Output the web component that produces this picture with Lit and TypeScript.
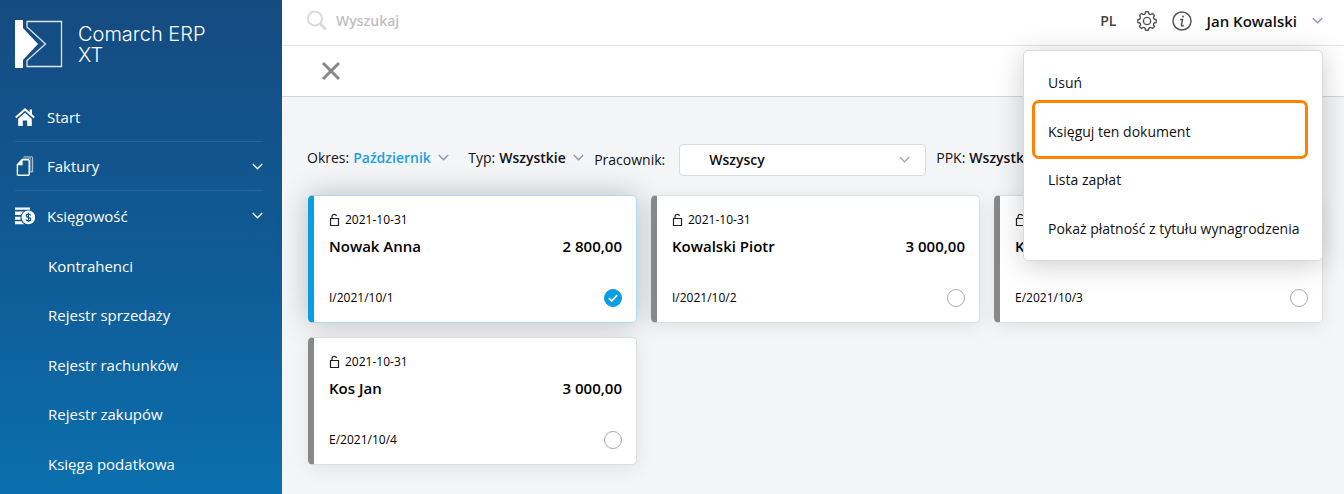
import { LitElement, html, css, svg, nothing } from "lit";
import { customElement, property } from "lit/decorators.js";

const chevron = html`<svg class="chevron" width="11" height="7" viewBox="0 0 11 7" aria-hidden="true">
  <path d="M0.8 1 5.5 5.8 10.2 1" fill="none" stroke="currentColor" stroke-width="1.3" />
</svg>`;

const houseIcon = svg`
  <path d="M0.8 10.6 10 2.4l9.2 8.2" fill="none" stroke="#fff" stroke-width="2" />
  <path d="M14.6 2.4h2.4v5l-2.4-2.2z" fill="#fff" />
  <path d="M10 5.8 3.2 11.8V19h4.6v-5.6h4.4V19h4.6v-7.2z" fill="#fff" />`;

const pagesIcon = svg`
  <g fill="none" stroke="#fff">
    <path d="M8.6.8h8q1 0 1 1V15.6H15.6" stroke-opacity="0.6" stroke-width="1.2" />
    <path d="M7.4 2.4h7.4q1 0 1 1V17" stroke-opacity="0.5" stroke-width="1" />
    <path d="M7 3.8h6.2q1 0 1 1V18.2q0 1-1 1H3.4q-1 0-1-1V8.6z" stroke-width="1.4" />
  </g>
  <path d="M7.6 3.6v5.6H2.2z" fill="#fff" />`;

const moneyIcon = svg`
  <path d="M0 1.4h15v2.4H0zM0 5.6h8.6Q6.6 7 6 9H0zM0 10.8h5.6q-.4 1.4 0 3H0zM0 15.2h6.4q1 2 3 3H0z" fill="#fff" />
  <circle cx="13.4" cy="11.4" r="6.8" fill="#fff" />
  <path d="M15.8 9.4q-.6-1.2-2.4-1.2-2.2 0-2.2 1.6 0 1.2 2.2 1.6 2.4.4 2.4 1.8 0 1.6-2.3 1.6-2 0-2.6-1.4M13.4 6.8v9.2" fill="none" stroke="#13568f" stroke-width="1.2" />`;

const gearPath = (() => {
  const teeth = 8;
  const points: string[] = [];
  for (let i = 0; i < teeth; i++) {
    const steps: [number, number][] = [[-0.5, 7.2], [-0.3, 7.6], [-0.2, 9.3], [0.2, 9.3], [0.3, 7.6]];
    for (const [offset, radius] of steps) {
      const angle = ((i + offset) / teeth) * Math.PI * 2;
      points.push(`${(10 + radius * Math.sin(angle)).toFixed(2)} ${(10 - radius * Math.cos(angle)).toFixed(2)}`);
    }
  }
  return `M${points.join("L")}Z`;
})();

interface NavItem {
  label: string;
  icon?: unknown;
  expandable?: boolean;
}

const mainNav: NavItem[] = [
  { label: "Start", icon: houseIcon },
  { label: "Faktury", icon: pagesIcon, expandable: true },
  { label: "Księgowość", icon: moneyIcon, expandable: true },
];
const subNav = ["Kontrahenci", "Rejestr sprzedaży", "Rejestr rachunków", "Rejestr zakupów", "Księga podatkowa"];

@customElement("app-sidebar")
export class AppSidebar extends LitElement {
  static styles = css`
    :host {
      display: block;
      box-sizing: border-box;
      padding: 20px 19px 0 15px;
      background: linear-gradient(#154b81, #105a94 50%, #0b6fad);
      color: #fff;
      font-size: 15px;
    }
    .brand { display: flex; gap: 15px; height: 73px; color: #fff; }
    .logo { flex: none; }
    .name { font: 300 20px/21px Inter, "Open Sans", sans-serif; padding-top: 4px; max-width: 150px; }
    ul { list-style: none; margin: 0; padding: 0; }
    .row {
      display: flex;
      align-items: center;
      box-sizing: border-box;
      height: 49px;
      border-bottom: 1px solid rgba(255, 255, 255, 0.1);
      color: inherit;
      text-decoration: none;
    }
    .row.last { height: 50px; border-color: transparent; }
    .row .icon { flex: none; margin-right: 12px; }
    .row .label { flex: 1; }
    .row.sub { height: 49px; padding-left: 33px; border: 0; }
    .row.sub.wide { height: 50px; }
  `;

  render() {
    return html`
      <div class="brand">
        <svg class="logo" width="48" height="48" viewBox="0 0 48 48" aria-hidden="true">
          <path d="M0 0h8v8l15 16L8 40v8H0z" fill="#fff" />
          <path d="M12 1.5H46.5v45H12V40.5L30.5 24 12 7z" fill="none" stroke="#fff" stroke-opacity=".85" stroke-width="1.3" />
        </svg>
        <div class="name">Comarch ERP XT</div>
      </div>
      <nav>
        <ul>
          ${mainNav.map((item, i) => html`<li>
            <a class="row ${i === mainNav.length - 1 ? "last" : ""}" href="#">
              <svg class="icon" width="20" height="20" viewBox="0 0 20 20" aria-hidden="true">${item.icon}</svg>
              <span class="label">${item.label}</span>
              ${item.expandable ? chevron : nothing}
            </a>
          </li>`)}
          ${subNav.map((label, i) => html`<li><a class="row sub ${i % 2 ? "wide" : ""}" href="#">${label}</a></li>`)}
        </ul>
      </nav>
    `;
  }
}

@customElement("payroll-card")
export class PayrollCard extends LitElement {
  @property() name = "";
  @property() amount = "";
  @property() number = "";
  @property() date = "";
  @property({ type: Boolean, reflect: true }) selected = false;

  static styles = css`
    :host {
      display: block;
      box-sizing: border-box;
      padding: 14px 14px 14px 15px;
      border: 1px solid #dcdddf;
      border-left: 6px solid #888;
      border-radius: 5px;
      background: #fff;
      box-shadow: 0 4px 18px rgba(0, 0, 0, 0.08);
      color: #000;
    }
    :host([selected]) {
      border-color: #a8dcf4;
      border-left-color: #069fe3;
      box-shadow: 0 0 30px rgba(0, 0, 0, 0.24);
    }
    .date { display: flex; align-items: center; gap: 5px; font-size: 12px; line-height: 20px; }
    .main { display: flex; justify-content: space-between; font-weight: 600; font-size: 15px; line-height: 32px; }
    .foot {
      display: flex;
      justify-content: space-between;
      align-items: center;
      margin-top: 26px;
      font-size: 12px;
      line-height: 20px;
    }
    .tick { display: grid; place-items: center; }
    .tick > * { grid-area: 1 / 1; }
    .tick input {
      appearance: none;
      box-sizing: border-box;
      width: 18px;
      height: 18px;
      margin: 0;
      border: 1px solid #aaa;
      border-radius: 50%;
      background: #fff;
    }
    .tick input:checked { border-color: #069fe3; background: #069fe3; }
    .tick svg { pointer-events: none; }
  `;

  render() {
    return html`
      <div class="date">
        <svg width="11" height="14" viewBox="0 0 11 14" fill="none" stroke="#222" stroke-width="1.2" aria-hidden="true">
          <path d="M1.5 5.5h8v7h-8zM3 5.5V3.4Q3.2 1.4 5.4 1.4 7.2 1.4 7.5 3" />
        </svg>
        <time datetime=${this.date}>${this.date}</time>
      </div>
      <div class="main"><span>${this.name}</span><span>${this.amount}</span></div>
      <div class="foot">
        <label for="pick">${this.number}</label>
        <span class="tick">
          <input id="pick" type="checkbox" .checked=${this.selected} />
          <svg width="12" height="10" viewBox="0 0 12 10" aria-hidden="true">
            <path d="M1.8 5.2 4.7 8 10.2 2" fill="none" stroke="#fff" stroke-width="1.8" />
          </svg>
        </span>
      </div>
    `;
  }
}

const payrolls = [
  { name: "Nowak Anna", amount: "2 800,00", number: "I/2021/10/1", selected: true },
  { name: "Kowalski Piotr", amount: "3 000,00", number: "I/2021/10/2", selected: false },
  { name: "Kos Jan", amount: "3 000,00", number: "E/2021/10/3", selected: false },
  { name: "Kos Jan", amount: "3 000,00", number: "E/2021/10/4", selected: false },
];

const actions = ["Usuń", "Księguj ten dokument", "Lista zapłat", "Pokaż płatność z tytułu wynagrodzenia"];

@customElement("app-root")
export class AppRoot extends LitElement {
  static styles = css`
    :host {
      display: grid;
      grid-template-columns: 282px minmax(0, 1fr);
      min-height: 100vh;
      background: #f4f5f7;
      font: 14px/20px "Open Sans", "Noto Sans", sans-serif;
      color: #111;
    }
    button, input, select { font: inherit; color: inherit; }
    button { padding: 0; border: 0; background: none; display: flex; align-items: center; }
    .topbar {
      display: flex;
      align-items: center;
      box-sizing: border-box;
      height: 46px;
      padding: 0 21px 4px 24px;
      background: #fff;
      border-bottom: 1px solid #e3e4e6;
    }
    .search { flex: 1; display: flex; align-items: center; gap: 9px; }
    .search input { flex: 1; border: 0; outline: 0; padding: 0; background: none; font-weight: 600; }
    .search input::placeholder { color: #bfbfbf; opacity: 1; }
    .lang { font-weight: 600; color: #444; margin-right: 21px; }
    .gear { margin-right: 15px; }
    .info { margin-right: 14px; }
    .user { font-weight: 600; font-size: 15px; gap: 15px; color: #111; }
    .user .chevron, .pick .chevron { color: #8a94ad; }
    .toolbar {
      position: relative;
      z-index: 1;
      display: flex;
      align-items: center;
      box-sizing: border-box;
      height: 51px;
      padding: 0 39px;
      background: #fff;
      border-bottom: 1px solid #d3d5d9;
    }
    .menu {
      position: absolute;
      top: 4px;
      right: 21px;
      box-sizing: border-box;
      width: 300px;
      margin: 0;
      padding: 5px 8px 9px;
      list-style: none;
      background: #fff;
      border: 1px solid #d8d9db;
      border-radius: 5px;
      box-shadow: 0 4px 28px rgba(0, 0, 0, 0.2);
    }
    .menu button { box-sizing: border-box; width: 100%; height: 49px; padding: 4px 0 0 16px; white-space: nowrap; }
    .menu .marked {
      width: 276px;
      height: 59px;
      margin: -5px 0 -6px;
      padding: 4px 0 0 13px;
      border: 3px solid #ff8200;
      border-radius: 7px;
    }
    .content { padding: 44px 21px 28px 25px; }
    .filters { display: flex; align-items: center; height: 33px; margin-bottom: 21px; }
    .filter { display: flex; align-items: center; gap: 4px; white-space: nowrap; }
    .pick { display: grid; align-items: center; }
    .pick > * { grid-area: 1 / 1; }
    .pick .chevron { justify-self: end; pointer-events: none; }
    .pick select {
      appearance: none;
      border: 0;
      margin: 0;
      padding: 0 18px 0 0;
      background: none;
      font-weight: 600;
    }
    .period { margin-right: 19px; }
    .period select { color: #1b9fe4; }
    .type { margin-right: 10px; }
    .employee { gap: 14px; margin-right: 10px; padding-top: 4px; }
    .employee .pick { width: 247px; }
    .employee select {
      width: 100%;
      height: 32px;
      padding: 0 29px;
      border: 1px solid #d9dadd;
      border-radius: 4px;
      background: #fff;
    }
    .employee .chevron { margin-right: 16px; color: #aaa; }
    .cards {
      display: grid;
      grid-template-columns: repeat(auto-fill, minmax(300px, 1fr));
      gap: 14px;
      margin-left: 1px;
    }
  `;

  private filter(kind: string, label: string, value: string) {
    return html`<div class="filter ${kind}">
      <label for=${kind}>${label}:</label>
      <span class="pick">
        <select id=${kind}><option>${value}</option></select>
        ${chevron}
      </span>
    </div>`;
  }

  render() {
    return html`
      <app-sidebar></app-sidebar>
      <div class="page">
        <header class="topbar">
          <div class="search">
            <svg width="21" height="21" viewBox="0 0 21 21" fill="none" stroke="#dadada" aria-hidden="true">
              <circle cx="9" cy="8.5" r="7" stroke-width="2" />
              <path d="m14 13.5 6 6" stroke-width="3" />
            </svg>
            <input type="search" placeholder="Wyszukaj" aria-label="Wyszukaj" />
          </div>
          <button class="lang">PL</button>
          <button class="gear" aria-label="Ustawienia">
            <svg width="20" height="20" viewBox="0 0 20 20" fill="none" stroke="#555" stroke-width="1.4" stroke-linejoin="round" aria-hidden="true">
              <path d=${gearPath} />
              <circle cx="10" cy="10" r="3.6" />
            </svg>
          </button>
          <button class="info" aria-label="Informacje">
            <svg width="20" height="20" viewBox="0 0 20 20" fill="none" stroke="#555" stroke-width="1.5" aria-hidden="true">
              <circle cx="10" cy="10" r="9" />
              <path d="M8 8.5h2.6L9.4 14q-.1 1 .8.9l1.6-.4" />
              <circle cx="11" cy="5.6" r="1" fill="#555" stroke="none" />
            </svg>
          </button>
          <button class="user">Jan Kowalski ${chevron}</button>
        </header>
        <div class="toolbar">
          <button aria-label="Zamknij">
            <svg width="20" height="20" viewBox="0 0 20 20" aria-hidden="true">
              <path d="m2 2 16 16M18 2 2 18" stroke="#888" stroke-width="3" />
            </svg>
          </button>
          <ul class="menu">
            ${actions.map((label, i) => html`<li><button class=${i === 1 ? "marked" : "action"}>${label}</button></li>`)}
          </ul>
        </div>
        <main class="content">
          <div class="filters">
            ${this.filter("period", "Okres", "Październik")}
            ${this.filter("type", "Typ", "Wszystkie")}
            ${this.filter("employee", "Pracownik", "Wszyscy")}
            ${this.filter("ppk", "PPK", "Wszystkie")}
          </div>
          <div class="cards">
            ${payrolls.map((p) => html`<payroll-card
              name=${p.name}
              amount=${p.amount}
              number=${p.number}
              date="2021-10-31"
              ?selected=${p.selected}
            ></payroll-card>`)}
          </div>
        </main>
      </div>
    `;
  }
}
